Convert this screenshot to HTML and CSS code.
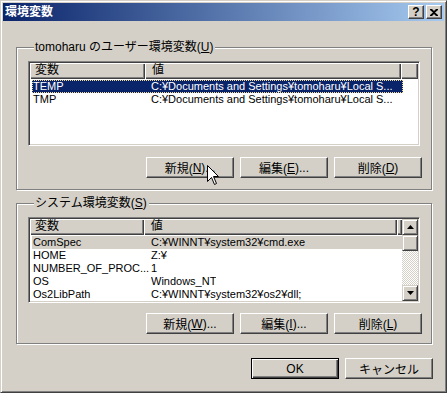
FILE: index.html
```html
<!DOCTYPE html>
<html lang="ja">
<head>
  <meta charset="UTF-8" />
  <title>環境変数</title>
  <link rel="stylesheet" href="styles.css">
</head>
<body>
  <div class="window">
    <div class="titlebar">
      <span class="title">環境変数</span>
      <div class="caption-btns">
        <span class="cap-btn help">?</span>
        <span class="cap-btn close">
          <svg width="8" height="7" viewBox="0 0 8 7"><path d="M0 0h2l2 2 2-2h2v1L5 3.5 8 6v1H6L4 5 2 7H0V6l3-2.5L0 1z" fill="#000"/></svg>
        </span>
      </div>
    </div>

    <div class="content">
      <div class="group user-group">
        <div class="legend">tomoharu のユーザー環境変数(<u>U</u>)</div>
        <div class="listview">
          <div class="lv-main">
            <div class="lv-header">
              <span class="hd-cell hd-name">変数</span>
              <span class="hd-cell hd-value">値</span>
              <span class="hd-cell hd-rest"></span>
            </div>
            <div class="lv-row selected">
              <span class="cell-name">TEMP</span>
              <span class="cell-value">C:¥Documents and Settings¥tomoharu¥Local S...</span>
            </div>
            <div class="lv-row">
              <span class="cell-name">TMP</span>
              <span class="cell-value">C:¥Documents and Settings¥tomoharu¥Local S...</span>
            </div>
          </div>
        </div>
        <div class="btn-row">
          <span class="btn">新規(<u>N</u>)...</span>
          <span class="btn">編集(<u>E</u>)...</span>
          <span class="btn">削除(<u>D</u>)</span>
        </div>
      </div>

      <div class="group system-group">
        <div class="legend">システム環境変数(<u>S</u>)</div>
        <div class="listview">
          <div class="lv-main">
            <div class="lv-header">
              <span class="hd-cell hd-name">変数</span>
              <span class="hd-cell hd-value">値</span>
              <span class="hd-cell hd-rest"></span>
            </div>
            <div class="lv-row inactive">
              <span class="cell-name">ComSpec</span>
              <span class="cell-value">C:¥WINNT¥system32¥cmd.exe</span>
            </div>
            <div class="lv-row">
              <span class="cell-name">HOME</span>
              <span class="cell-value">Z:¥</span>
            </div>
            <div class="lv-row">
              <span class="cell-name">NUMBER_OF_PROC...</span>
              <span class="cell-value">1</span>
            </div>
            <div class="lv-row">
              <span class="cell-name">OS</span>
              <span class="cell-value">Windows_NT</span>
            </div>
            <div class="lv-row">
              <span class="cell-name">Os2LibPath</span>
              <span class="cell-value">C:¥WINNT¥system32¥os2¥dll;</span>
            </div>
          </div>
          <div class="scrollbar">
            <span class="sb-btn">
              <svg width="7" height="4" viewBox="0 0 7 4"><path d="M3.5 0L7 4H0z" fill="#000"/></svg>
            </span>
            <span class="sb-thumb"></span>
            <span class="sb-track"></span>
            <span class="sb-btn">
              <svg width="7" height="4" viewBox="0 0 7 4"><path d="M0 0h7L3.5 4z" fill="#000"/></svg>
            </span>
          </div>
        </div>
        <div class="btn-row">
          <span class="btn">新規(<u>W</u>)...</span>
          <span class="btn">編集(<u>I</u>)...</span>
          <span class="btn">削除(<u>L</u>)</span>
        </div>
      </div>

      <div class="dialog-btns">
        <span class="btn default">OK</span>
        <span class="btn">キャンセル</span>
      </div>
    </div>

    <svg class="cursor" width="13" height="20" viewBox="0 0 13 20">
      <path d="M0.5 0.5V16.5L4.5 12.5L7.5 19.5L9.5 18.5L6.5 11.5H11.5Z" fill="#fff" stroke="#000" stroke-width="1" stroke-linejoin="miter"/>
    </svg>
  </div>
</body>
</html>
```

FILE: styles.css
```css
body {
  margin: 0;
  background: #d4d0c8;
  font-family: "Liberation Sans", "Noto Sans CJK JP", sans-serif;
  font-size: 12px;
  color: #000;
}

.window {
  position: relative;
  width: 447px;
  height: 393px;
  box-sizing: border-box;
  padding: 2px;
  background: #d4d0c8;
  border: 1px solid;
  border-color: #d4d0c8 #404040 #404040 #d4d0c8;
  box-shadow: inset 1px 1px #fff, inset -1px -1px #808080;
}

.titlebar {
  height: 18px;
  display: flex;
  align-items: center;
  justify-content: space-between;
  background: linear-gradient(to right, #0a246a, #a6caf0);
}

.title {
  color: #fff;
  font-weight: bold;
  padding-left: 2px;
  line-height: 18px;
}

.caption-btns {
  display: flex;
  gap: 2px;
  padding-right: 2px;
}

.cap-btn {
  width: 16px;
  height: 14px;
  box-sizing: border-box;
  display: flex;
  align-items: center;
  justify-content: center;
  background: #d4d0c8;
  border: 1px solid;
  border-color: #fff #404040 #404040 #fff;
  box-shadow: inset -1px -1px #808080;
}

.help {
  font-weight: bold;
  font-size: 12px;
  line-height: 12px;
}

.content {
  padding: 26px 12px 0 13px;
}

.group {
  display: flex;
  flex-direction: column;
  border: 1px solid #808080;
  box-shadow: inset 1px 1px #fff, 1px 1px #fff;
  padding: 0 11px 11px;
}

.system-group {
  margin-top: 13px;
  padding-bottom: 9px;
}

.legend {
  align-self: flex-start;
  margin: -8px 0 0 6px;
  padding: 0 2px 0 1px;
  line-height: 14px;
  background: #d4d0c8;
}

.listview {
  display: flex;
  margin-top: 7px;
  height: 85px;
  box-sizing: border-box;
  background: #fff;
  border: 1px solid;
  border-color: #808080 #fff #fff #808080;
  box-shadow: inset 1px 1px #404040, inset -1px -1px #d4d0c8;
  padding: 1px;
}

.system-group .listview {
  height: 86px;
}

.lv-main {
  flex: 1;
  overflow: hidden;
}

.lv-header {
  display: flex;
  height: 16px;
  margin-bottom: 1px;
}

.hd-cell {
  box-sizing: border-box;
  height: 16px;
  padding-left: 5px;
  line-height: 15px;
  background: #d4d0c8;
  box-shadow: inset 1px 1px #fff, inset -1px -1px #404040, inset -2px -2px #808080;
}

.hd-name {
  width: 115px;
}

.hd-value {
  width: 256px;
  padding-left: 7px;
}

.hd-rest {
  flex: 1;
}

.lv-row {
  display: flex;
  height: 13px;
  margin: 0 15px 0 2px;
  line-height: 13px;
  font-size: 11px;
  white-space: nowrap;
}

.system-group .lv-row {
  margin-right: 0;
}

.cell-name {
  width: 118px;
  padding-left: 1px;
  overflow: hidden;
}

.cell-value {
  overflow: hidden;
}

.lv-row.selected {
  background: #0a246a;
  color: #fff;
  outline: 1px dotted #f5db95;
  outline-offset: -1px;
}

.lv-row.inactive {
  background: #d4d0c8;
}

.scrollbar {
  width: 16px;
  display: flex;
  flex-direction: column;
}

.sb-btn,
.sb-thumb {
  height: 16px;
  box-sizing: border-box;
  display: flex;
  align-items: center;
  justify-content: center;
  background: #d4d0c8;
  border: 1px solid;
  border-color: #d4d0c8 #404040 #404040 #d4d0c8;
  box-shadow: inset 1px 1px #fff, inset -1px -1px #808080;
}

.sb-track {
  flex: 1;
  background: repeating-conic-gradient(#d4d0c8 0 25%, #fff 0 50%) 0 0 / 2px 2px;
}

.btn-row {
  display: flex;
  justify-content: flex-end;
  gap: 6px;
  margin-top: 11px;
  margin-right: -2px;
}

.system-group .btn-row {
  margin-top: 10px;
}

.btn {
  width: 88px;
  height: 21px;
  box-sizing: border-box;
  display: flex;
  align-items: center;
  justify-content: center;
  background: #d4d0c8;
  border: 1px solid;
  border-color: #fff #404040 #404040 #fff;
  box-shadow: inset -1px -1px #808080;
}

.btn.default {
  border-color: #000;
  box-shadow: inset 1px 1px #fff, inset -1px -1px #404040, inset -2px -2px #808080;
}

.dialog-btns {
  display: flex;
  justify-content: flex-end;
  gap: 6px;
  margin: 14px -1px 0 0;
}

.cursor {
  position: absolute;
  left: 206px;
  top: 164px;
}
```
